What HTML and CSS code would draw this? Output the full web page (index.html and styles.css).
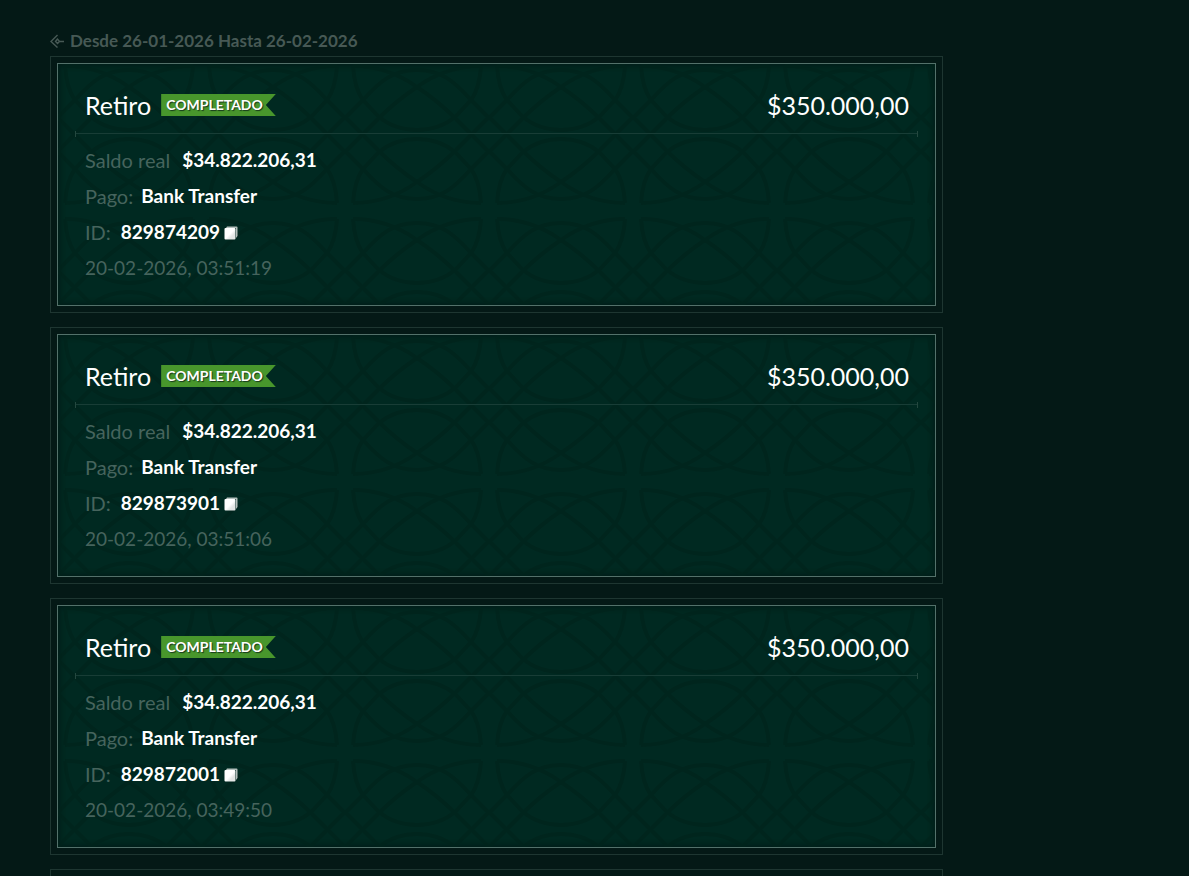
FILE: index.html
```
<!DOCTYPE html>
<html lang="es">
<head>
    <meta charset="UTF-8">
    <meta name="viewport" content="width=device-width, initial-scale=1.0">
    <title>Transacciones</title>
    <link rel="stylesheet" href="styles.css">
</head>
<body>
    <!-- Shared shapes -->
    <svg class="sprite" aria-hidden="true">
        <defs>
            <linearGradient id="copyFill" x1="0" y1="0" x2="1" y2="1">
                <stop offset="0.5" stop-color="#fff"/>
                <stop offset="0.7" stop-color="#e3e6e5"/>
            </linearGradient>
            <symbol id="copy" viewBox="0 0 14 14">
                <path d="M3 0.5h9.5a1 1 0 0 1 1 1V10l-1.5 2V2H2z" fill="#b4bfbc"/>
                <rect x="0.5" y="2" width="11" height="11.5" rx="1" fill="url(#copyFill)"/>
            </symbol>
            <pattern id="lattice" x="-1" y="-6" width="144" height="153" patternUnits="userSpaceOnUse">
                <g id="latticeHalf" fill="none" stroke="#00231b" stroke-width="4">
                    <path d="M8 8C32 8 54 16 72 29C90 41 101 51 110 60L144 94"/>
                    <path d="M136 8C112 8 90 16 72 29C54 41 43 51 34 60L0 94"/>
                    <path d="M0 60L18 42C35 23 48 12 72 12S109 23 126 42L144 60"/>
                    <path d="M8 8C9 23 12 34 18 42L34 59Q50 72 72 72T110 59L126 42C132 34 135 23 136 8"/>
                </g>
                <use href="#latticeHalf" transform="matrix(1 0 0 -1 0 153)"/>
            </pattern>
        </defs>
    </svg>

    <main class="history">
        <a href="#" class="period">
            <svg class="period-icon" viewBox="0 0 14 14" aria-hidden="true">
                <path d="M7.5 1L1 7.5l6.5 6M7.5 5L5.5 7.5l2 2 2-2zM9.5 7.5H14" fill="none" stroke="currentColor" stroke-width="1.4"/>
            </svg>
            Desde 26-01-2026 Hasta 26-02-2026
        </a>

        <div class="list">
            <article class="card">
                <div class="card-inner">
                    <svg class="card-pattern" aria-hidden="true"><rect width="100%" height="100%" fill="url(#lattice)"/></svg>
                    <header class="card-head">
                        <h2 class="type">Retiro</h2>
                        <span class="status">COMPLETADO</span>
                        <span class="amount">$350.000,00</span>
                    </header>
                    <dl class="details">
                        <div class="row balance"><dt>Saldo real</dt><dd>$34.822.206,31</dd></div>
                        <div class="row"><dt>Pago:</dt><dd>Bank Transfer</dd></div>
                        <div class="row ident"><dt>ID:</dt><dd>829874209</dd>
                            <button type="button" class="copy" aria-label="Copiar ID"><svg><use href="#copy"/></svg></button>
                        </div>
                    </dl>
                    <time class="date">20-02-2026, 03:51:19</time>
                </div>
            </article>

            <article class="card">
                <div class="card-inner">
                    <svg class="card-pattern" aria-hidden="true"><rect width="100%" height="100%" fill="url(#lattice)"/></svg>
                    <header class="card-head">
                        <h2 class="type">Retiro</h2>
                        <span class="status">COMPLETADO</span>
                        <span class="amount">$350.000,00</span>
                    </header>
                    <dl class="details">
                        <div class="row balance"><dt>Saldo real</dt><dd>$34.822.206,31</dd></div>
                        <div class="row"><dt>Pago:</dt><dd>Bank Transfer</dd></div>
                        <div class="row ident"><dt>ID:</dt><dd>829873901</dd>
                            <button type="button" class="copy" aria-label="Copiar ID"><svg><use href="#copy"/></svg></button>
                        </div>
                    </dl>
                    <time class="date">20-02-2026, 03:51:06</time>
                </div>
            </article>

            <article class="card">
                <div class="card-inner">
                    <svg class="card-pattern" aria-hidden="true"><rect width="100%" height="100%" fill="url(#lattice)"/></svg>
                    <header class="card-head">
                        <h2 class="type">Retiro</h2>
                        <span class="status">COMPLETADO</span>
                        <span class="amount">$350.000,00</span>
                    </header>
                    <dl class="details">
                        <div class="row balance"><dt>Saldo real</dt><dd>$34.822.206,31</dd></div>
                        <div class="row"><dt>Pago:</dt><dd>Bank Transfer</dd></div>
                        <div class="row ident"><dt>ID:</dt><dd>829872001</dd>
                            <button type="button" class="copy" aria-label="Copiar ID"><svg><use href="#copy"/></svg></button>
                        </div>
                    </dl>
                    <time class="date">20-02-2026, 03:49:50</time>
                </div>
            </article>

            <article class="card">
                <div class="card-inner"></div>
            </article>
        </div>
    </main>
</body>
</html>
```
FILE: styles.css
```
* {
    box-sizing: border-box;
}
body {
    margin: 0;
    height: 100vh;
    overflow: hidden;
    background-color: #041916;
    color: #fff;
    font-family: Lato, "Liberation Sans", sans-serif;
    font-size: 19px;
}
.sprite {
    position: absolute;
    width: 0;
    height: 0;
}
.history {
    height: 100%;
    max-width: 993px;
    padding: 29px 50px 0;
    overflow: hidden;
}
.period {
    display: flex;
    align-items: center;
    gap: 6px;
    margin-bottom: 3px;
    color: #475955;
    font-size: 17px;
    font-weight: bold;
    line-height: 24px;
    text-decoration: none;
}
.period-icon {
    width: 14px;
    height: 14px;
}
.list {
    display: grid;
    gap: 14px;
}
.card {
    padding: 6px;
    border: 1px solid #1e3631;
}
.card-inner {
    position: relative;
    padding: 25px 17px 19px 18px;
    border: 1px solid #53716a;
    background-color: #002921;
    box-shadow: inset 0 0 5px 2px #001d18;
}
.card-pattern {
    position: absolute;
    inset: 0;
    width: 100%;
    height: 100%;
    opacity: 0.65;
}
.card-head,
.details,
.date {
    position: relative;
}
.card-head {
    display: flex;
    align-items: center;
    padding: 0 9px 12px;
    border-bottom: 1px solid #183d36;
    font-size: 25px;
    line-height: 32px;
}
/* End ticks of the divider */
.card-head::before,
.card-head::after {
    content: "";
    position: absolute;
    bottom: -4px;
    width: 1px;
    height: 6px;
    background-color: #24483f;
}
.card-head::before {
    left: -1px;
}
.card-head::after {
    right: 0;
}
.type {
    margin: 0;
    font-size: 25px;
    font-weight: normal;
}
.status {
    margin-left: 10px;
    padding: 0 13px 0 5px;
    background-color: #48962c;
    clip-path: polygon(0 0, 100% 0, calc(100% - 10px) 50%, 100% 100%, 0 100%);
    font-size: 14px;
    font-weight: bold;
    line-height: 22px;
    text-shadow: 1px 1px 1px #17391a;
}
.amount {
    margin-left: auto;
}
.details {
    margin: 8px 0 0;
    padding: 0 9px;
}
.row {
    display: flex;
    align-items: center;
    gap: 8px;
    line-height: 36px;
}
.balance {
    gap: 12px;
}
.ident {
    gap: 10px;
}
dt,
.date {
    color: #46645d;
}
dt {
    font-size: 20px;
}
dd {
    margin: 0;
    font-weight: bold;
}
.copy {
    display: flex;
    margin-left: -6px;
    padding: 2px 0 0;
    border: 0;
    background: none;
    cursor: pointer;
}
.copy svg {
    width: 14px;
    height: 14px;
}
.date {
    display: block;
    padding: 0 9px;
    line-height: 36px;
}
```
